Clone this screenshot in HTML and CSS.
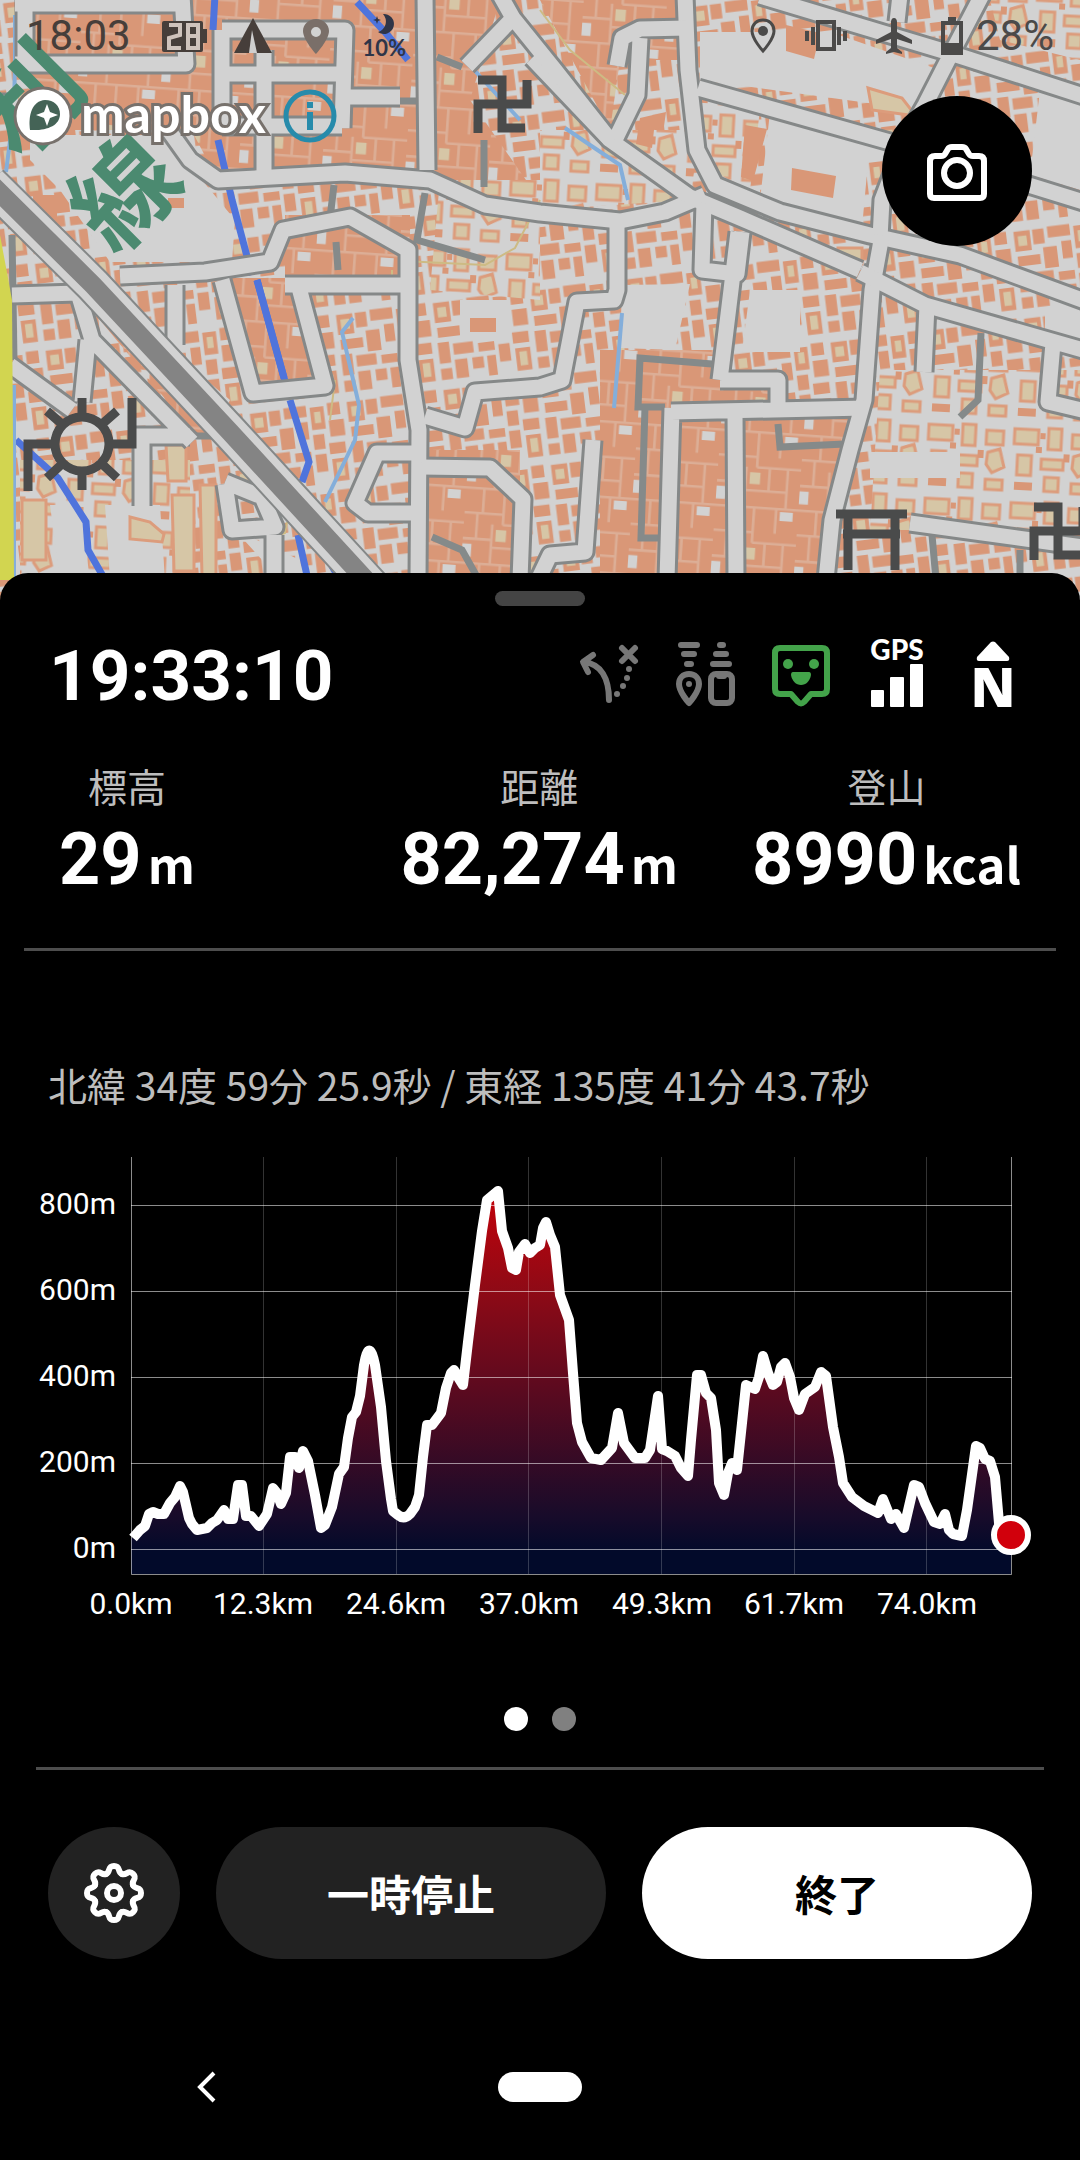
FILE: index.html
```html
<!DOCTYPE html>
<html lang="ja">
<head>
<meta charset="utf-8">
<meta name="viewport" content="width=device-width, initial-scale=1">
<title>活動記録</title>
<link rel="stylesheet" href="styles.css">
</head>
<body>
<section class="map" aria-label="地図">
  <svg class="map-canvas" viewBox="0 0 1080 600" preserveAspectRatio="xMidYMin slice" aria-hidden="true">
    <defs>
      <pattern id="dense" width="64" height="58" patternUnits="userSpaceOnUse" patternTransform="rotate(4) scale(1.3)">
        <rect width="64" height="58" class="bldg"/>
        <path class="gap" d="M0 1H64M14 1V20M30 1V28M47 1V20M0 20H30M30 28H64M10 20V40M22 28V58M0 40H22M40 28V46M54 28V58M22 46H54"/>
        <path class="open" d="M50 3h10v7h-10zM0 44h7v10h-7z"/>
        <rect class="yard" x="25" y="32" width="8" height="9"/>
      </pattern>
      <pattern id="medium" width="78" height="70" patternUnits="userSpaceOnUse" patternTransform="rotate(-7) scale(1.25)">
        <rect width="78" height="70" class="open"/>
        <path class="bldg" d="M2 3h13v16H2zM17 3h9v12h-9zM29 2h18v9H29zM50 4h11v18H50zM64 2h10v10H64zM3 23h18v8H3zM24 18h11v17H24zM39 15h8v14h-8zM64 16h12v13H64zM2 35h9v17H2zM14 37h16v9H14zM50 26h9v12h-9zM62 34h13v9H62zM34 39h13v7H34zM14 50h10v15H14zM28 50h9v9h-9zM50 42h9v14h-9zM63 47h12v18H63zM2 56h9v9H2zM40 50h7v16h-7z"/>
        <path class="yard" d="M53 8h5v9h-5zM5 7h7v8H5zM66 50h6v11h-6z"/>
      </pattern>
      <pattern id="sparse" width="86" height="74" patternUnits="userSpaceOnUse" patternTransform="rotate(3)">
        <rect width="86" height="74" class="open"/>
        <path class="house" d="M4 5h24v15H4zM38 3h13v21H38zM62 8h17v14H62zM8 31h14v20H8zM32 34h22v10H32zM64 30l12-4 5 18-12 6-6-8zM36 52h14v14H36zM63 57h17v10H63z"/>
        <path class="bldg" d="M30 8h5v6h-5zM54 28h6v8h-6zM6 58h18v8H6zM26 22h6v6h-6z"/>
      </pattern>
      <g id="roads">
        <path d="M25 -5V66M15 4H182M15 64H186L182 -5M222 30H345L342 128M222 30V125M264 50V172M222 74H344M344 97H400M222 126H342"/>
        <path d="M170 132L190 160 218 180 345 173 430 180 485 205 540 213 620 221 665 212 705 195"/>
        <path d="M425 -5L427 170M120 276L205 272 270 262 283 230 350 217 408 250 408 360 419 430 418 580M285 285H405M222 280L253 393 325 386 297 280M175 285V345"/>
        <path d="M532 58L610 140 690 197 740 218 860 270M685 -5L688 70 697 150 715 185 780 212 870 235 960 255 1090 303M698 88L890 142 1090 204M760 -4L950 53 1090 98M900 -5L897 22M982 -5L948 60 925 105 905 140 882 200 880 238"/>
        <path d="M882 235L872 290 864 400 850 450 832 520 826 580M617 225V290L614 300 577 302 562 380 540 387 475 392 465 428 425 416"/>
        <path d="M704 203L702 270 737 274 742 232M738 232L731 290 720 380M720 380H778V412M671 412L866 408M672 408L667 580M735 412L736 580M593 440L585 552 550 555 538 580"/>
        <path d="M860 272L925 305 1090 352M927 305L924 372M1053 343L1048 402 1090 412M910 523L1090 548"/>
        <path d="M500 -5L513 18 467 66M513 18L555 70 610 140M617 66L622 38 640 29 688 28M640 38L637 95 615 140"/>
        <path d="M12 295L78 293 92 340 192 442M88 340L82 402M10 365L72 410M136 436H190M142 436V506M415 453H377L355 503 368 513H415M421 467L490 468 523 499 520 580M225 484L232 530 275 527 262 497 225 482M274 535V580M0 103H18"/>
      </g>
    </defs>
    <rect width="1080" height="600" class="open"/>
    <rect width="1080" height="600" fill="url(#medium)"/>
    <path fill="url(#dense)" d="M160 0H420V175H215L160 70zM28 0H180V130H40zM285 215H410V285H285zM222 278L300 278 325 390 253 393zM430 0H500L470 100 540 200 430 175zM600 350H720V580H600zM672 412H860L830 580H672zM540 0H690V60L620 60 610 130zM700 385H770V410H700zM415 450H520V580H415zM100 320L195 435 210 435 105 300z"/>
    <path fill="url(#sparse)" d="M880 370H1080V530H870zM440 180H540V300L430 290zM20 460H190V580H20zM540 130H700L690 200 540 210zM990 0H1080V60L1000 40zM700 90L760 110 750 190 710 170z"/>
    <path class="open" d="M30 135H165L235 220 232 262 110 262 60 190 30 160zM700 32L830 32 940 70 920 110 700 80zM770 112L870 140 862 228 760 200zM622 285L690 284 675 350 620 348zM750 290H800V352H742zM130 345L165 345 230 400 215 430zM50 505H80L90 580H60zM105 505H160L165 580H110zM1040 90H1080V190L1030 175zM870 452H960V478H870zM460 300H510V340H460zM235 530L300 560 300 580 280 580zM1045 310H1080V340L1045 330z"/>
    <path class="house" d="M22 500h24v60H22zM172 495h22v76h-20zM200 485h16v92h-14zM166 445h20v36h-18zM130 517l20 5 14 12-2 8-32-3zM868 88l34 10 14 18-44-6zM838 248h24v16h-24z"/>
    <path class="bldg" d="M33 195h24v22H33zM168 198h16v10h-16zM792 168l44 8-3 22-42-8zM640 118l26-6-2 14-10 4-2 18-16-4zM745 125l22 4-14 52-12-4zM786 25l34 8-6 26-28-8zM470 318h26v14h-26z"/>
    <g class="alley">
      <path d="M712 364L640 358 638 407H665M645 407L641 538H661M778 424L780 447 845 444M981 333L978 400 960 417M437 57L462 67M398 101H418M484 140V187M334 185L330 218M425 193L417 240 485 260M336 242L338 270M432 537L462 550 476 575M190 436H220L245 455M932 535L936 580M1020 550V580M12 235L14 360"/>
    </g>
    <g class="river">
      <path d="M215 -5L213 30M218 140L232 200 252 275M257 280L286 385M290 400L309 462 302 482M298 535L308 580M320 545L340 580M16 440L58 478 86 522 88 550 104 578M357 2L385 32 408 60"/>
    </g>
    <path class="stream" d="M15 15V60L14 110 6 172M14 385V580M353 318L342 332 352 375 359 405 355 440 325 502M622 313L614 408M565 128L590 145 620 165 628 200M465 60L520 120"/>
    <path class="trail" d="M403 261L485 265 515 248 540 200M540 10L570 50 625 95M392 270V290M330 420L335 380M265 540L285 533 287 522"/>
    <use href="#roads" class="road-edge"/>
    <use href="#roads" class="road"/>
    <path class="river" d="M257 280L284 378"/>
    <path class="rail-edge" d="M-10 183L93 285 230 432 375 590"/>
    <path class="rail-gap" d="M-10 183L93 285 230 432 375 590"/>
    <path class="rail" d="M-10 183L93 285 230 432 375 590"/>
    <path class="highway" d="M0 235L5 262 12 300 14 580 0 580z"/>
    <g class="line-name">
      <text transform="translate(28 98) rotate(-45)" y="39">利</text>
      <text transform="translate(124 192) rotate(-45)" y="39">線</text>
    </g>
    <g class="symbol">
      <g id="temple"><path d="M478 80H502V128H525M478 133V104H527V80"/></g>
      <use href="#temple" x="556" y="427"/>
      <path d="M836 514H907M843 534H900M848 514V570M895 514V570"/>
      <circle cx="82" cy="444" r="27"/>
      <path d="M28 491V444H54M110 444H132V398M82 398V416M82 472V490M47 411L63 425M117 411L101 425M47 478L63 463M117 478L101 463"/>
    </g>
  </svg>

  <header class="statusbar">
    <div class="status-group status-left">
      <span class="status-text">18:03</span>
      <svg class="status-icon" viewBox="0 0 48 40" width="48" height="40"><rect x="1" y="5" width="41" height="31" rx="2" fill="currentColor"/><path d="M42 13h4v14h-4z" fill="currentColor"/><path d="M8 9h11v10L8 22v10h12M27 9h10v23H27zM27 20h10" fill="none" stroke="#cfc3bc" stroke-width="4"/></svg>
      <svg class="status-icon" viewBox="0 0 40 40" width="40" height="40"><path d="M20 2L39 37H1z" fill="currentColor"/><path d="M19 14l5 23h-8z" fill="#cfcfcf"/></svg>
      <svg class="status-icon pale" viewBox="0 0 30 40" width="30" height="40"><path fill-rule="evenodd" d="M15 3C8 3 2 8 2 15c0 9 13 23 13 23s13-14 13-23C28 8 22 3 15 3zm0 8a5 5 0 110 10 5 5 0 010-10z" fill="currentColor"/></svg>
      <span class="night"><svg viewBox="0 0 24 24" width="24" height="24"><path d="M11 2a10 10 0 11-5 18 11 11 0 005-18z" fill="currentColor"/><path d="M5 4l1 3 3 1-3 1-1 3-1-3-3-1 3-1z" fill="currentColor"/></svg><b>10%</b></span>
    </div>
    <div class="status-group status-right">
      <svg class="status-icon" viewBox="0 0 30 40" width="30" height="40"><path d="M15 4C9 4 4 8 4 15c0 8 11 20 11 20s11-12 11-20C26 8 21 4 15 4z" fill="none" stroke="currentColor" stroke-width="3"/><circle cx="15" cy="15" r="5" fill="currentColor"/></svg>
      <svg class="status-icon" viewBox="0 0 44 40" width="44" height="40"><path d="M14 6h16v27H14zM9 11v18M35 11v18M3 15v10M41 15v10" fill="none" stroke="currentColor" stroke-width="4"/></svg>
      <svg class="status-icon" viewBox="0 0 40 40" width="40" height="40"><path d="M20 2c2 0 3 2 3 4v10l15 8v4l-15-5v9l5 4v2l-8-2-8 2v-2l5-4v-9L2 28v-4l15-8V6c0-2 1-4 3-4z" fill="currentColor"/></svg>
      <svg class="status-icon" viewBox="0 0 24 40" width="24" height="40"><path fill-rule="evenodd" d="M8 1h8v4h7v34H1V5h7zM5 9v18h14V9z" fill="currentColor"/></svg>
      <span class="status-text">28%</span>
    </div>
  </header>

  <div class="attribution">
    <a class="mapbox" href="#mapbox"><svg viewBox="0 0 60 60" width="60" height="60" aria-hidden="true"><circle cx="30" cy="30" r="28" fill="#fff" stroke="#77716c" stroke-width="3"/><path d="M17 44c-2-15 2-29 15-30 9 0 15 6 15 14 0 12-14 17-30 16z" fill="#446356"/><path d="M34 18l3 8 8 3-8 3-3 8-3-8-8-3 8-3z" fill="#fff"/></svg><span>mapbox</span></a>
    <button class="info" aria-label="情報"><svg viewBox="0 0 56 56" width="56" height="56"><circle cx="28" cy="28" r="24" fill="none" stroke="#278bab" stroke-width="5"/><path d="M25 14h6v6h-6zM25 24h6v18h-6z" fill="#278bab"/></svg></button>
  </div>
  <button class="camera" aria-label="カメラ"><svg viewBox="0 0 150 150"><g fill="none" stroke="#fff" stroke-width="6" stroke-linejoin="round"><path d="M53 57h6q3 0 4-2l3-5q1-2 4-2h10q3 0 4 2l3 5q1 2 4 2h6q5 0 5 5v33q0 4-4 4H52q-4 0-4-4V62q0-5 5-5z" transform="translate(0 3)"/><circle cx="75" cy="77" r="13"/></g></svg></button>
</section>

<main class="sheet">
  <div class="handle"></div>
  <div class="summary">
    <time class="elapsed">19:33:10</time>
    <div class="indicators">
      <svg viewBox="0 0 72 72"><g fill="none" stroke="#777" stroke-width="6" stroke-linecap="round" stroke-linejoin="round"><path d="M20 17L10 24l5 10M11 24c17 2 25 16 25 38M49 10l13 13M62 10L49 23"/></g><g fill="#777"><circle cx="56" cy="31" r="3"/><circle cx="54" cy="40" r="3"/><circle cx="50" cy="48" r="3"/><circle cx="44" cy="56" r="3"/></g></svg>
      <svg viewBox="0 0 72 72"><g fill="none" stroke="#777" stroke-width="6" stroke-linecap="round" stroke-linejoin="round"><path d="M12 7h16M15 16h10M18 26h4M51 7h3M47 16h10M44 26h16"/><path d="M20 36c-6 0-10 4-10 10 0 8 10 19 10 19s10-11 10-19c0-6-4-10-10-10z"/><rect x="42" y="36" width="21" height="29" rx="5"/><path d="M50 38h5"/></g><circle cx="20" cy="46" r="3" fill="#777"/></svg>
      <svg viewBox="0 0 72 72"><path d="M15 10h42q5 0 5 5v36q0 5-5 5H46l-7 8q-3 3-6 0l-7-8H15q-5 0-5-5V15q0-5 5-5z" fill="none" stroke="#43a34a" stroke-width="6" stroke-linejoin="round"/><g fill="#43a34a"><circle cx="23" cy="26" r="5"/><circle cx="49" cy="26" r="5"/><path d="M28 34h16q2 0 2 3c-1 6-5 10-10 10s-9-4-10-10q0-3 2-3z"/></g></svg>
      <svg viewBox="0 0 72 72" fill="#fff"><text class="gps" x="36" y="22">GPS</text><rect x="10" y="52" width="13" height="17" rx="1"/><rect x="29" y="39" width="14" height="30" rx="1"/><rect x="49" y="26" width="13" height="43" rx="1"/></svg>
      <svg viewBox="0 0 72 72" fill="#fff"><path d="M34 4q2-1 4 0l14 15q1 4-2 4H22q-3 0-2-4z"/><text class="north" x="36" y="69">N</text></svg>
    </div>
  </div>

  <dl class="stats">
    <div class="stat"><dt>標高</dt><dd>29<small>m</small></dd></div>
    <div class="stat"><dt>距離</dt><dd>82,274<small>m</small></dd></div>
    <div class="stat"><dt>登山</dt><dd>8990<small>kcal</small></dd></div>
  </dl>
  <hr class="rule rule-wide">

  <p class="coords">北緯 34度 59分 25.9秒 / 東経 135度 41分 43.7秒</p>

  <svg class="chart" viewBox="0 0 1080 500" role="img" aria-label="標高グラフ">
    <defs>
      <linearGradient id="fill" gradientUnits="userSpaceOnUse" x1="0" y1="50" x2="0" y2="412">
        <stop offset="0" stop-color="#c4020a"/><stop offset=".28" stop-color="#8e0a16"/><stop offset=".58" stop-color="#560a20"/><stop offset=".9" stop-color="#180b2a"/><stop offset="1" stop-color="#020a2a"/>
      </linearGradient>
      <path id="profile" d="M133 398L140 390 145 386 149 374 153 372 158 374 164 374 170 363 175 357 180 346 183 352 189 378 192 384 197 390 207 388 212 383 217 380 224 370 228 379 233 379 238 345 242 345 246 376 251 376 259 386 267 374 273 348 277 353 281 364 286 353 290 317 295 317 299 328 303 311 308 321 315 355 321 388 325 385 332 367 339 334 344 327 348 298 352 277 356 272 360 256 364 225Q369 196 375 225L381 267 386 321 391 359 393 371 398 375Q404 380 410 374L415 367 419 355 423 317 427 285 432 285 441 273 446 248 451 233 454 230 458 237 463 245 468 202 475 145 482 91 487 60 493 55 498 51 502 91 508 108 512 128 516 130 519 112 525 104 530 113 535 108 540 105 543 88 546 82 550 95 555 107 560 155 569 180 573 233 577 283 582 302 591 318 601 320 612 308 618 273 624 303 635 318 645 318 650 310 658 256 662 309 667 311 675 316 681 328 688 336 691 300 697 235 701 235 706 253 711 258 716 290 719 343 724 355 728 333 732 323 737 330 742 283 746 245 755 249 759 237 763 216 768 233 773 245 777 242 781 227 785 223 790 237 794 258 799 270 805 254 815 247 821 232 826 236 833 287 839 317 843 343 852 357 864 366 878 373 883 359 891 379 896 374 904 388 914 345 919 347 925 363 934 382 940 384 945 374 949 390 953 394 962 396 967 370 976 306 980 308 985 319 990 321 995 337 999 383 1011 395"/>
    </defs>
    <path d="M131 434V398L133 398 140 390 145 386 149 374 153 372 158 374 164 374 170 363 175 357 180 346 183 352 189 378 192 384 197 390 207 388 212 383 217 380 224 370 228 379 233 379 238 345 242 345 246 376 251 376 259 386 267 374 273 348 277 353 281 364 286 353 290 317 295 317 299 328 303 311 308 321 315 355 321 388 325 385 332 367 339 334 344 327 348 298 352 277 356 272 360 256 364 225Q369 196 375 225L381 267 386 321 391 359 393 371 398 375Q404 380 410 374L415 367 419 355 423 317 427 285 432 285 441 273 446 248 451 233 454 230 458 237 463 245 468 202 475 145 482 91 487 60 493 55 498 51 502 91 508 108 512 128 516 130 519 112 525 104 530 113 535 108 540 105 543 88 546 82 550 95 555 107 560 155 569 180 573 233 577 283 582 302 591 318 601 320 612 308 618 273 624 303 635 318 645 318 650 310 658 256 662 309 667 311 675 316 681 328 688 336 691 300 697 235 701 235 706 253 711 258 716 290 719 343 724 355 728 333 732 323 737 330 742 283 746 245 755 249 759 237 763 216 768 233 773 245 777 242 781 227 785 223 790 237 794 258 799 270 805 254 815 247 821 232 826 236 833 287 839 317 843 343 852 357 864 366 878 373 883 359 891 379 896 374 904 388 914 345 919 347 925 363 934 382 940 384 945 374 949 390 953 394 962 396 967 370 976 306 980 308 985 319 990 321 995 337 999 383 1011 395V434z" fill="url(#fill)"/>
    <path class="grid-v" d="M263.500 17V434M396.500 17V434M528.500 17V434M661.500 17V434M794.500 17V434M926.500 17V434"/>
    <path class="grid-h" d="M131 65.500H1012M131 151.500H1012M131 237.500H1012M131 323.500H1012M131 409.500H1012M131.500 17V434.500H1011.500V17"/>
    <use href="#profile" class="profile"/>
    <circle cx="1011" cy="395" r="17" fill="#d1000c" stroke="#fff" stroke-width="6"/>
    <g class="axis axis-y"><text x="116" y="74">800m</text><text x="116" y="160">600m</text><text x="116" y="246">400m</text><text x="116" y="332">200m</text><text x="116" y="418">0m</text></g>
    <g class="axis axis-x"><text x="131" y="474">0.0km</text><text x="263" y="474">12.3km</text><text x="396" y="474">24.6km</text><text x="529" y="474">37.0km</text><text x="662" y="474">49.3km</text><text x="794" y="474">61.7km</text><text x="927" y="474">74.0km</text></g>
  </svg>

  <div class="pager"><span class="dot dot-on"></span><span class="dot"></span></div>
  <hr class="rule">

  <div class="actions">
    <button class="btn btn-round" aria-label="設定"><svg viewBox="-33 -33 66 66"><g fill="none" stroke="#fff" stroke-width="6" stroke-linecap="round"><path id="tooth" d="M-8 -19C-3 -21-7 -27 0 -27C7 -27 3 -21 8 -19"/><use href="#tooth" transform="rotate(45)"/><use href="#tooth" transform="rotate(90)"/><use href="#tooth" transform="rotate(135)"/><use href="#tooth" transform="rotate(180)"/><use href="#tooth" transform="rotate(225)"/><use href="#tooth" transform="rotate(270)"/><use href="#tooth" transform="rotate(315)"/><circle r="7"/></g></svg></button>
    <button class="btn">一時停止</button>
    <button class="btn btn-light">終了</button>
  </div>
</main>

<nav class="system-nav">
  <button aria-label="戻る"><svg viewBox="0 0 24 32" width="24" height="32"><path d="M19 2L5 16l14 14" fill="none" stroke="#fff" stroke-width="4"/></svg></button>
  <button aria-label="ホーム"><span class="home-pill"></span></button>
</nav>
</body>
</html>
```
FILE: styles.css
```css
* { box-sizing: border-box; }
body {
  margin: 0;
  background: #000;
  color: #fff;
  font-family: Roboto, "Noto Sans CJK JP", sans-serif;
}
button { border: 0; padding: 0; background: none; color: inherit; font: inherit; cursor: pointer; }

/* map */
.map { position: relative; height: 600px; overflow: hidden; background: #d1d1d1; }
.map-canvas { display: block; width: 100%; height: 100%; }
.open { fill: #d2d2d2; }
.bldg { fill: #d99777; }
.yard { fill: #d6c6a6; }
.house { fill: #d6c6a6; stroke: #dc9c7c; stroke-width: 3; }
.gap { fill: none; stroke: #dcae96; stroke-width: 2; }
.alley { fill: none; stroke: #858a8a; stroke-width: 7; }
.river { fill: none; stroke: #4f74dc; stroke-width: 7; }
.stream { fill: none; stroke: #84aeda; stroke-width: 4; }
.trail { fill: none; stroke: #cdbb84; stroke-width: 2; }
.road-edge { fill: none; stroke: #858888; stroke-width: 21; stroke-linejoin: round; }
.road { fill: none; stroke: #d2d2d2; stroke-width: 15; stroke-linejoin: round; }
.rail-edge { fill: none; stroke: #858888; stroke-width: 38; }
.rail-gap { fill: none; stroke: #d2d2d2; stroke-width: 34; }
.rail { fill: none; stroke: #848484; stroke-width: 19; }
.highway { fill: #d2d550; }
.line-name { fill: #4b8a70; font: 700 104px "Noto Sans CJK JP", sans-serif; text-anchor: middle; }
.symbol { fill: none; stroke: #4a4b4b; stroke-width: 9; }

.statusbar {
  position: absolute;
  inset: 0 0 auto;
  display: flex;
  justify-content: space-between;
  padding: 12px 26px 0;
  color: #463e3a;
}
.status-group { display: flex; align-items: center; height: 48px; }
.status-left { gap: 24px; }
.status-right { gap: 26px; color: #4b4a49; }
.status-text { font-size: 42px; line-height: 48px; }
.status-left .status-text { margin-right: 6px; }
.status-right .status-icon:last-of-type { margin-right: -14px; }
.status-icon { flex: none; }
.pale { color: #7a6f69; margin-left: 4px; }
.night { display: flex; flex-direction: column; align-items: center; margin-left: 8px; color: #2f3548; font: 22px/24px Lato, sans-serif; }
.night b { font-weight: 700; }

.attribution { position: absolute; left: 13px; top: 83px; display: flex; align-items: center; gap: 16px; }
.mapbox { display: flex; align-items: center; gap: 8px; color: #fff; text-decoration: none; font: 700 52px/60px Lato, sans-serif; }
.mapbox span { -webkit-text-stroke: 6px #77716c; paint-order: stroke fill; padding-bottom: 6px; }
.info svg, .mapbox svg { display: block; }
.camera { position: absolute; top: 96px; right: 48px; width: 150px; height: 150px; border-radius: 50%; background: #000; }
.camera svg { display: block; width: 100%; }

/* sheet */
.sheet { position: relative; margin-top: -27px; padding-top: 18px; background: #000; border-radius: 28px 28px 0 0; }
.handle { width: 90px; height: 15px; margin: 0 auto 30px; border-radius: 8px; background: #444; }
.summary { display: flex; justify-content: space-between; align-items: center; padding: 0 51px 0 49px; }
.elapsed { padding-top: 4px; font-size: 71px; line-height: 72px; font-weight: 700; }
.indicators { display: flex; gap: 24px; height: 72px; }
.indicators svg { width: 72px; height: 72px; overflow: visible; }
.gps { font: 900 28px Lato, sans-serif; text-anchor: middle; }
.north { font: 800 54px "Open Sans", sans-serif; text-anchor: middle; }

.stats { display: flex; justify-content: flex-end; gap: 74px; margin: 43px 0 46px; padding: 0 59px; }
.stat { text-align: center; }
.stat:first-child { margin-right: auto; }
.stat dt { color: #bdbdbd; font: 400 39px/60px "Noto Sans CJK JP", sans-serif; }
.stat dd { display: flex; align-items: baseline; justify-content: center; gap: 6px; height: 84px; margin: 3px 0 0; font-size: 72px; line-height: 84px; font-weight: 700; }
.stat small { font: 700 49px/84px "Noto Sans CJK JP", sans-serif; }

.rule { height: 3px; margin: 0 36px; border: 0; background: #4d4d4d; }
.rule-wide { margin: 0 24px; }
.coords { margin: 103px 48px 26px; color: #bdbdbd; font: 400 39px/60px "Noto Sans CJK JP", sans-serif; }

.chart { display: block; width: 100%; overflow: visible; }
.grid-v { fill: none; stroke: #fff; stroke-opacity: .2; }
.grid-h { fill: none; stroke: #fff; stroke-opacity: .55; }
.profile { fill: none; stroke: #fff; stroke-width: 10; stroke-linejoin: round; }
.axis { fill: #fff; font-size: 30px; }
.axis-y { text-anchor: end; }
.axis-x { text-anchor: middle; }

.pager { display: flex; justify-content: center; gap: 24px; margin: 67px 0 36px; }
.dot { width: 24px; height: 24px; border-radius: 50%; background: #808080; }
.dot-on { background: #fff; }

.actions { display: flex; gap: 36px; padding: 57px 48px 0; }
.btn { flex: 1; height: 132px; border-radius: 66px; background: #222; color: #fff; font: 700 42px/60px "Noto Sans CJK JP", sans-serif; }
.btn-light { background: #fff; color: #000; }
.btn-round { flex: none; width: 132px; display: grid; place-items: center; }
.btn-round svg { width: 66px; height: 66px; }

.system-nav { display: grid; grid-template-columns: repeat(3, 1fr); justify-items: center; align-items: center; padding: 112px 40px 54px; }
.system-nav svg, .home-pill { display: block; }
.home-pill { width: 84px; height: 30px; border-radius: 15px; background: #fff; }
```
